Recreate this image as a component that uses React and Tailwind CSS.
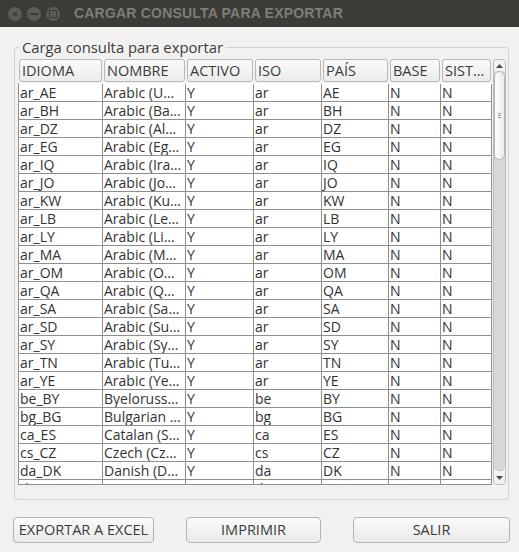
import React from "react";

const rows = [
  ["ar_AE", "Arabic (U…", "Y", "ar", "AE", "N", "N"],
  ["ar_BH", "Arabic (Ba…", "Y", "ar", "BH", "N", "N"],
  ["ar_DZ", "Arabic (Al…", "Y", "ar", "DZ", "N", "N"],
  ["ar_EG", "Arabic (Eg…", "Y", "ar", "EG", "N", "N"],
  ["ar_IQ", "Arabic (Ira…", "Y", "ar", "IQ", "N", "N"],
  ["ar_JO", "Arabic (Jo…", "Y", "ar", "JO", "N", "N"],
  ["ar_KW", "Arabic (Ku…", "Y", "ar", "KW", "N", "N"],
  ["ar_LB", "Arabic (Le…", "Y", "ar", "LB", "N", "N"],
  ["ar_LY", "Arabic (Li…", "Y", "ar", "LY", "N", "N"],
  ["ar_MA", "Arabic (M…", "Y", "ar", "MA", "N", "N"],
  ["ar_OM", "Arabic (O…", "Y", "ar", "OM", "N", "N"],
  ["ar_QA", "Arabic (Q…", "Y", "ar", "QA", "N", "N"],
  ["ar_SA", "Arabic (Sa…", "Y", "ar", "SA", "N", "N"],
  ["ar_SD", "Arabic (Su…", "Y", "ar", "SD", "N", "N"],
  ["ar_SY", "Arabic (Sy…", "Y", "ar", "SY", "N", "N"],
  ["ar_TN", "Arabic (Tu…", "Y", "ar", "TN", "N", "N"],
  ["ar_YE", "Arabic (Ye…", "Y", "ar", "YE", "N", "N"],
  ["be_BY", "Byeloruss…", "Y", "be", "BY", "N", "N"],
  ["bg_BG", "Bulgarian …", "Y", "bg", "BG", "N", "N"],
  ["ca_ES", "Catalan (S…", "Y", "ca", "ES", "N", "N"],
  ["cs_CZ", "Czech (Cz…", "Y", "cs", "CZ", "N", "N"],
  ["da_DK", "Danish (D…", "Y", "da", "DK", "N", "N"],
  ["de_AT", "German (…", "Y", "de", "AT", "N", "N"],
];

const headers = ["IDIOMA", "NOMBRE", "ACTIVO", "ISO", "PAÍS", "BASE", "SIST…"];
const widths = ["w-[84px]", "w-[83px]", "w-[68px]", "w-[68px]", "w-[67px]", "w-[52px]", "w-[51px]"];

function WinButton({ children }) {
  return (
    <div className="w-[14px] h-[14px] rounded-full bg-[#5b5a56] flex items-center justify-center">
      {children}
    </div>
  );
}

function ScrollBar() {
  return (
    <div className="ml-[1px] w-[13px] flex flex-col rounded-[4px] border border-[#bdbdbd] bg-[#f3f3f3] overflow-hidden">
      <div className="h-[11px] flex items-center justify-center">
        <svg width="7" height="4" viewBox="0 0 7 4">
          <polygon points="0,4 7,4 3.5,0" fill="#4a4a4a" />
        </svg>
      </div>
      <div className="flex-1 flex flex-col rounded-b-[5px] bg-[#d8d8d8] border-b border-[#bcbcbc]">
        <div className="h-[89px] rounded-[6px] border border-[#b3b3b3] bg-gradient-to-r from-[#fdfdfd] to-[#ebebeb] flex flex-col items-center justify-center gap-[1px]">
          <div className="w-[3px] h-[1px] bg-[#9a9a9a]" />
          <div className="w-[3px] h-[1px] bg-[#9a9a9a]" />
          <div className="w-[3px] h-[1px] bg-[#9a9a9a]" />
        </div>
      </div>
      <div className="h-[13px] flex items-center justify-center">
        <svg width="7" height="4" viewBox="0 0 7 4">
          <polygon points="0,0 7,0 3.5,4" fill="#4a4a4a" />
        </svg>
      </div>
    </div>
  );
}

function Button({ label, width }) {
  return (
    <button
      className={`${width} h-[26px] rounded-[4px] border border-[#b4b4b4] bg-gradient-to-b from-[#fbfbfb] to-[#e9e9e9] text-[14.5px] text-[#3c3c3c] leading-none`}
    >
      {label}
    </button>
  );
}

export default function App() {
  return (
    <div className="w-[519px] h-[552px] bg-[#f2f1f0] flex flex-col font-['Open_Sans',sans-serif] text-[#333]">
      <div className="h-[27px] shrink-0 bg-[#3c3b37] flex items-center">
        <div className="ml-[8px] flex gap-[5px]">
          <WinButton>
            <svg width="8" height="8" viewBox="0 0 8 8">
              <path d="M2 2 L6 6 M6 2 L2 6" stroke="#3b3a36" strokeWidth="1.3" />
            </svg>
          </WinButton>
          <WinButton>
            <div className="w-[8px] h-[2px] bg-[#3b3a36]" />
          </WinButton>
          <WinButton>
            <div className="w-[8px] h-[8px] border-[1.5px] border-[#3b3a36]" />
          </WinButton>
        </div>
        <div className="ml-[14px] text-[14px] font-bold tracking-[0.2px] text-[#7f7d78] font-['Liberation_Sans',sans-serif]">
          CARGAR CONSULTA PARA EXPORTAR
        </div>
      </div>

      <fieldset className="mt-[11px] ml-[14px] w-[495px] border border-[#d3d2d0] rounded-[3px] pl-[3px] pr-[2px] pt-[3px] pb-[14px]">
        <legend className="ml-[1px] px-[3px] text-[14.8px] leading-[18px] text-[#3c3c3c]">
          Carga consulta para exportar
        </legend>
        <div className="flex">
          <div className="w-[474px] flex flex-col">
            <div className="h-[24px] flex pl-[1px]">
              {headers.map((h, i) => (
                <div key={h} className={`${widths[i]} h-[23px] pr-[1px] ${i > 0 ? "pl-[1px]" : ""}`}>
                  <div className="h-full rounded-[3px] border border-[#b9b9b9] bg-gradient-to-b from-[#fbfbfb] to-[#ebebeb] px-[2px] flex items-center text-[14.5px] text-[#3c3c3c] whitespace-nowrap overflow-hidden">
                    {h}
                  </div>
                </div>
              ))}
            </div>
            <div className="h-[402px] pt-[1px] bg-white border-l border-b border-[#8f8f8f] overflow-hidden">
              {rows.map((r) => (
                <div key={r[0]} className="h-[18px] flex border-b border-[#8f8f8f]">
                  {r.map((c, i) => (
                    <div
                      key={i}
                      className={`${widths[i]} ${i === 0 ? "w-[83px]" : ""} shrink-0 border-r border-[#8f8f8f] pl-[1px] text-[14px] leading-[17px] whitespace-nowrap overflow-hidden`}
                    >
                      {c}
                    </div>
                  ))}
                </div>
              ))}
            </div>
          </div>
          <ScrollBar />
        </div>
      </fieldset>

      <div className="mt-[17px] ml-[13px] w-[497px] flex justify-between">
        <Button label="EXPORTAR A EXCEL" width="w-[141px]" />
        <Button label="IMPRIMIR" width="w-[135px]" />
        <Button label="SALIR" width="w-[157px]" />
      </div>
    </div>
  );
}
